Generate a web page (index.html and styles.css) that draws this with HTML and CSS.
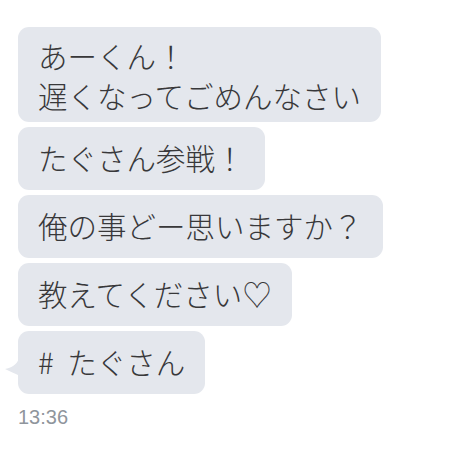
FILE: index.html
```html
<!DOCTYPE html>
<html lang="ja">
<head>
<meta charset="utf-8">
<title>トーク</title>
<link rel="stylesheet" href="styles.css">
</head>
<body>
<main class="thread">
  <div class="bubble bubble-multi">あーくん！<br>遅くなってごめんなさい</div>
  <div class="bubble">たぐさん参戦！</div>
  <div class="bubble">俺の事どー思いますか？</div>
  <div class="bubble">教えてください♡</div>
  <div class="bubble bubble-last">
    <svg class="tail" width="14" height="20" viewBox="0 0 14 20" aria-hidden="true">
      <path d="M14 0 C13 6 9 10 0 12 C5 14.5 10 16.5 14 18.5 Z" fill="#e4e7ed"/>
    </svg>
    # たぐさん
  </div>
  <div class="time">13:36</div>
</main>
</body>
</html>
```
FILE: styles.css
```css
html, body {
  margin: 0;
  padding: 0;
  background: #ffffff;
}

.thread {
  display: flex;
  flex-direction: column;
  align-items: flex-start;
  gap: 5px;
  padding: 27px 0 0 18px;
}

.bubble {
  position: relative;
  background: #e4e7ed;
  color: #38383a;
  border-radius: 11px;
  padding: 10px 20px 13px;
  font-family: "Noto Sans CJK JP", "Noto Sans", sans-serif;
  font-weight: 300;
  font-size: 29.5px;
  line-height: 40px;
  white-space: nowrap;
}

/* two-line message sits tighter in its bubble */
.bubble-multi {
  padding-top: 7.5px;
  padding-bottom: 7.5px;
}

.bubble-last {
  word-spacing: 7px;
}

.tail {
  position: absolute;
  left: -13px;
  top: 26px;
}

.time {
  margin-top: 7px;
  font-family: "Liberation Sans", Arial, sans-serif;
  font-size: 20px;
  color: #8f959c;
}
```
